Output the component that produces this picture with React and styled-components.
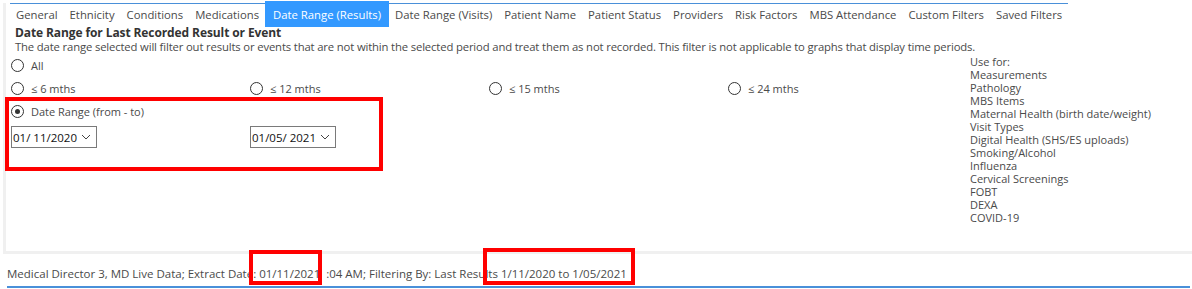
import React from 'react'
import styled, { createGlobalStyle } from 'styled-components'

const GlobalStyle = createGlobalStyle`
  body {
    margin: 0;
    background: #fff;
    font-family: "Open Sans", "Noto Sans", "Liberation Sans", sans-serif;
    color: #4a4a4a;
  }
`

const Page = styled.div`
  position: relative;
  width: 1192px;
  height: 289px;
  overflow: hidden;
`

const Panel = styled.div`
  margin: 3px 0 0 3px;
  height: 248px;
  border-left: 3px solid #f0f0f0;
  border-bottom: 3px solid #f0f0f0;
  display: flex;
  flex-direction: column;
`

const TabStrip = styled.div`
  display: inline-flex;
  align-self: flex-start;
  margin-left: 4px;
  border-top: 1px solid #4a90d9;
  height: 22px;
`

const Tab = styled.div`
  padding: 0 6px;
  font-size: 11.3px;
  line-height: 22px;
  white-space: nowrap;
  color: ${p => (p.active ? '#fff' : '#4a4a4a')};
  background: ${p => (p.active ? '#3399ff' : 'transparent')};
  ${p => p.active && 'margin-top: -3px; height: 26px; line-height: 28px; padding: 0 8px;'}
`

const Body = styled.div`
  display: flex;
  padding-left: 9px;
  flex: 1;
`

const Main = styled.div`
  flex: 1;
  min-width: 0;
`

const Heading = styled.div`
  font-size: 12px;
  font-weight: 700;
  color: #333;
  line-height: 13px;
  letter-spacing: -0.1px;
`

const Desc = styled.div`
  font-size: 11.3px;
  line-height: 15px;
  letter-spacing: -0.15px;
  white-space: nowrap;
`

const OptionRow = styled.div`
  display: grid;
  grid-template-columns: repeat(4, 239px);
  margin-left: -4px;
  height: 23px;
  align-items: center;
`

const Radio = styled.label`
  display: flex;
  align-items: center;
  gap: 7px;
  font-size: 11px;
  color: #4a4a4a;
  white-space: nowrap;
`

const Circle = styled.span`
  width: 11px;
  height: 11px;
  border: 1px solid #333;
  border-radius: 50%;
  display: flex;
  align-items: center;
  justify-content: center;
  &::after {
    content: '';
    width: 5px;
    height: 5px;
    border-radius: 50%;
    background: ${p => (p.checked ? '#333' : 'transparent')};
  }
`

const DateRow = styled.div`
  display: grid;
  grid-template-columns: repeat(2, 239px);
  margin-left: -4px;
  margin-top: 3px;
`

const DateBox = styled.div`
  width: 86px;
  height: 22px;
  border: 1px solid #7a7a7a;
  display: flex;
  align-items: center;
  justify-content: space-between;
  padding: 0 5px 0 1px;
  box-sizing: border-box;
  font-size: 11.5px;
  color: #111;
`

const UseFor = styled.div`
  flex: none;
  width: 222px;
  padding-top: 29px;
  font-size: 11px;
  line-height: 13px;
  color: #4a4a4a;
`

const Footer = styled.div`
  margin: 0 2px 0 7px;
  height: 32px;
  border-bottom: 2px solid #4a90d9;
  font-size: 11.5px;
  line-height: 40px;
  white-space: nowrap;
  color: #4a4a4a;
`

const Highlight = styled.div`
  position: absolute;
  border: 4px solid #ff0000;
  box-sizing: border-box;
  pointer-events: none;
`

const Chevron = () => (
  <svg width="10" height="6" viewBox="0 0 10 6">
    <path d="M1 1 L5 5 L9 1" fill="none" stroke="#444" strokeWidth="1" />
  </svg>
)

const tabs = ['General', 'Ethnicity', 'Conditions', 'Medications', 'Date Range (Results)', 'Date Range (Visits)', 'Patient Name', 'Patient Status', 'Providers', 'Risk Factors', 'MBS Attendance', 'Custom Filters', 'Saved Filters']

const useFor = ['Use for:', 'Measurements', 'Pathology', 'MBS Items', 'Maternal Health (birth date/weight)', 'Visit Types', 'Digital Health (SHS/ES uploads)', 'Smoking/Alcohol', 'Influenza', 'Cervical Screenings', 'FOBT', 'DEXA', 'COVID-19']

const Option = ({ label, checked }) => (
  <Radio>
    <Circle checked={checked} />
    {label}
  </Radio>
)

export default function App() {
  return (
    <Page>
      <GlobalStyle />
      <Panel>
        <TabStrip>
          {tabs.map(t => <Tab key={t} active={t === 'Date Range (Results)'}>{t}</Tab>)}
        </TabStrip>
        <Body>
          <Main>
            <Heading>Date Range for Last Recorded Result or Event</Heading>
            <Desc>The date range selected will filter out results or events that are not within the selected period and treat them as not recorded. This filter is not applicable to graphs that display time periods.</Desc>
            <OptionRow><Option label="All" /></OptionRow>
            <OptionRow>
              <Option label="≤ 6 mths" />
              <Option label="≤ 12 mths" />
              <Option label="≤ 15 mths" />
              <Option label="≤ 24 mths" />
            </OptionRow>
            <OptionRow><Option label="Date Range (from - to)" checked /></OptionRow>
            <DateRow>
              <DateBox>01/ 11/2020 <Chevron /></DateBox>
              <DateBox>01/05/ 2021 <Chevron /></DateBox>
            </DateRow>
          </Main>
          <UseFor>
            {useFor.map(u => <div key={u}>{u}</div>)}
          </UseFor>
        </Body>
      </Panel>
      <Footer>Medical Director 3, MD Live Data; Extract Date: 01/11/2021 &nbsp;:04 AM; Filtering By: Last Results 1/11/2020 to 1/05/2021</Footer>
      <Highlight style={{ left: 5, top: 97, width: 378, height: 74 }} />
      <Highlight style={{ left: 249, top: 250, width: 73, height: 35 }} />
      <Highlight style={{ left: 483, top: 248, width: 152, height: 37 }} />
    </Page>
  )
}
